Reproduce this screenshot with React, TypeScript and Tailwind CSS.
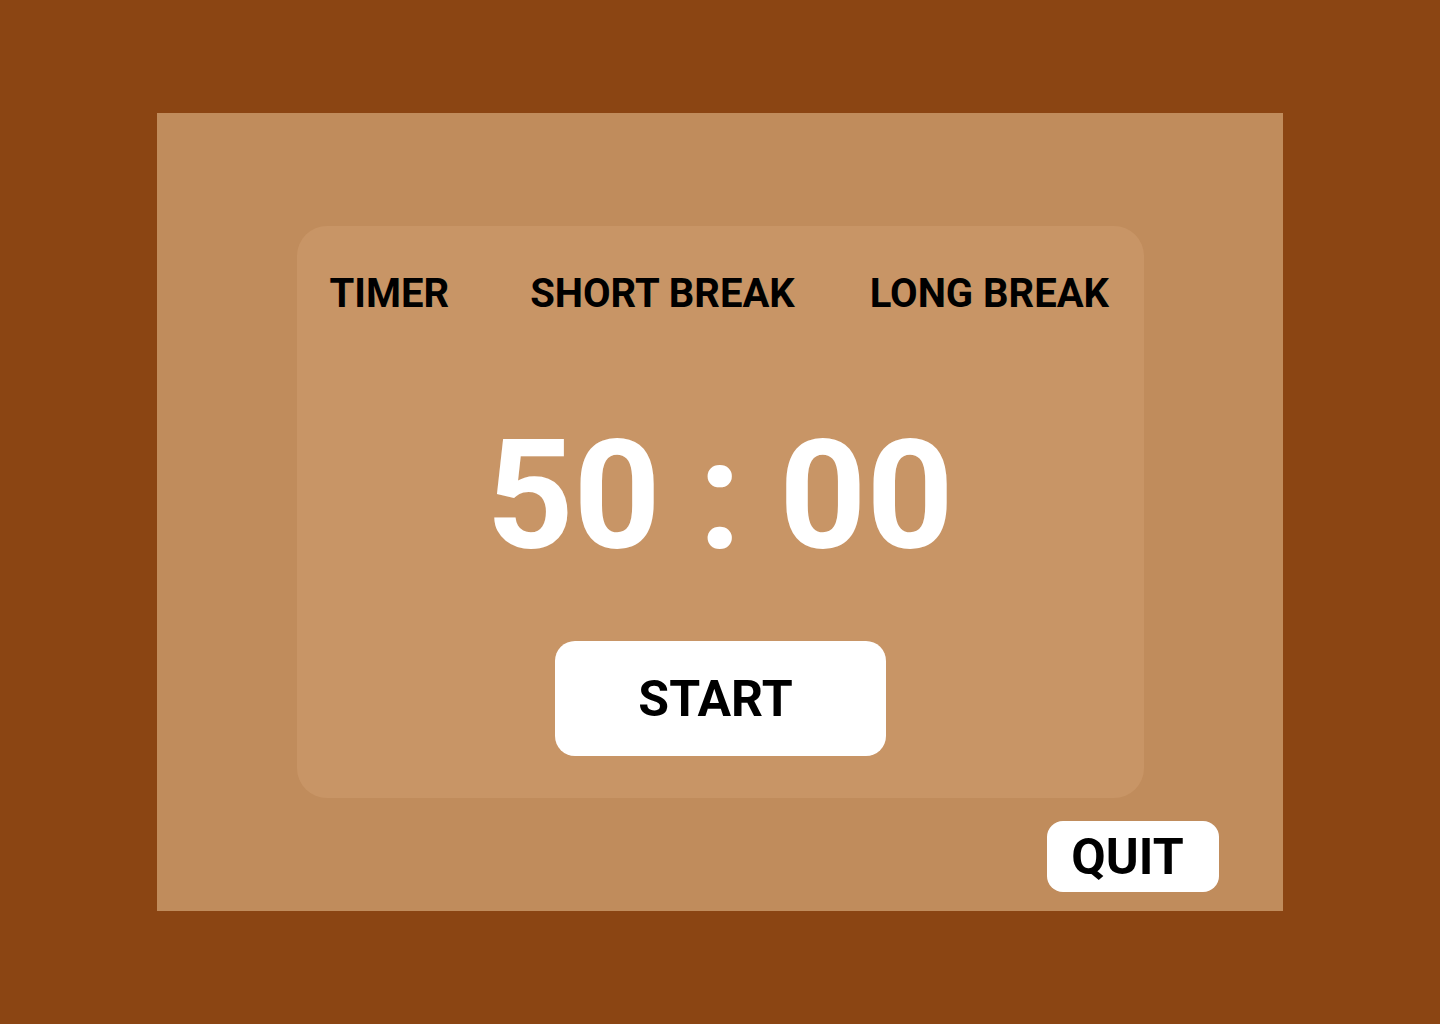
import React from "react";

export default function App() {
  const font = { fontFamily: "Roboto, 'Liberation Sans', sans-serif" };
  return (
    <div className="w-[1440px] h-[1024px] bg-[#8B4513] flex items-center justify-center" style={font}>
      <div className="w-[1126px] h-[798px] bg-[#C08C5C] flex flex-col items-center pt-[113px]">
        <div className="w-[847px] h-[572px] bg-[#C89566] rounded-[30px] flex flex-col items-center">
          <div className="w-full flex items-center pl-[33px] mt-[40px] h-[56px] text-[40px] font-bold text-black leading-none">
            <span>TIMER</span>
            <span className="ml-[81px]">SHORT BREAK</span>
            <span className="ml-[75px]">LONG BREAK</span>
          </div>
          <div className="mt-[98px] text-[152px] font-bold text-white leading-none">50 : 00</div>
          <button className="mt-[69px] w-[331px] h-[115px] bg-white rounded-[20px] text-[50px] font-bold text-black leading-none pr-[9px]">
            START
          </button>
        </div>
        <button className="self-end mr-[64px] mt-[23px] w-[172px] h-[71px] bg-white rounded-[16px] text-[50px] font-bold text-black leading-none pr-[11px]">
          QUIT
        </button>
      </div>
    </div>
  );
}
